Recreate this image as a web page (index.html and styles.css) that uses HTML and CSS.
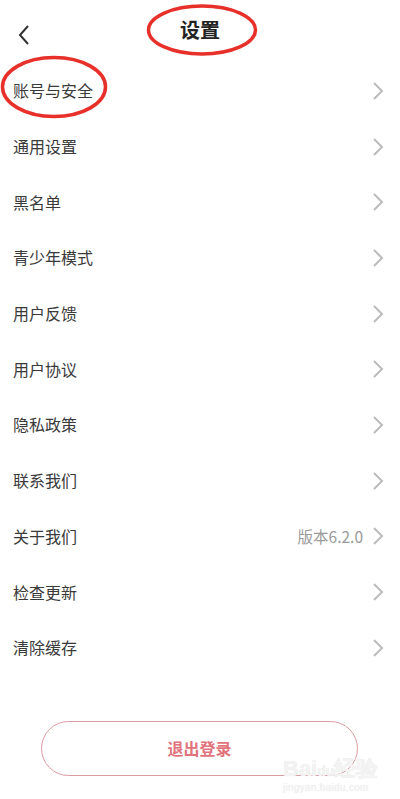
FILE: index.html
```html
<!DOCTYPE html>
<html lang="zh">
<head>
<meta charset="utf-8">
<link rel="stylesheet" href="styles.css">
</head>
<body>
<div class="page">
  <header class="header">
    <svg class="back" width="14" height="22" viewBox="0 0 14 22"><path d="M11 2 L3 11 L11 20" fill="none" stroke="#333" stroke-width="2"/></svg>
    <h1 class="title">设置</h1>
  </header>
  <ul class="list">
    <li class="row"><span class="label">账号与安全</span><span class="right"><svg class="chev" width="12" height="20" viewBox="0 0 12 20"><path d="M2 2 L10 10 L2 18" fill="none" stroke="#bbb" stroke-width="2"/></svg></span></li>
    <li class="row"><span class="label">通用设置</span><span class="right"><svg class="chev" width="12" height="20" viewBox="0 0 12 20"><path d="M2 2 L10 10 L2 18" fill="none" stroke="#bbb" stroke-width="2"/></svg></span></li>
    <li class="row"><span class="label">黑名单</span><span class="right"><svg class="chev" width="12" height="20" viewBox="0 0 12 20"><path d="M2 2 L10 10 L2 18" fill="none" stroke="#bbb" stroke-width="2"/></svg></span></li>
    <li class="row"><span class="label">青少年模式</span><span class="right"><svg class="chev" width="12" height="20" viewBox="0 0 12 20"><path d="M2 2 L10 10 L2 18" fill="none" stroke="#bbb" stroke-width="2"/></svg></span></li>
    <li class="row"><span class="label">用户反馈</span><span class="right"><svg class="chev" width="12" height="20" viewBox="0 0 12 20"><path d="M2 2 L10 10 L2 18" fill="none" stroke="#bbb" stroke-width="2"/></svg></span></li>
    <li class="row"><span class="label">用户协议</span><span class="right"><svg class="chev" width="12" height="20" viewBox="0 0 12 20"><path d="M2 2 L10 10 L2 18" fill="none" stroke="#bbb" stroke-width="2"/></svg></span></li>
    <li class="row"><span class="label">隐私政策</span><span class="right"><svg class="chev" width="12" height="20" viewBox="0 0 12 20"><path d="M2 2 L10 10 L2 18" fill="none" stroke="#bbb" stroke-width="2"/></svg></span></li>
    <li class="row"><span class="label">联系我们</span><span class="right"><svg class="chev" width="12" height="20" viewBox="0 0 12 20"><path d="M2 2 L10 10 L2 18" fill="none" stroke="#bbb" stroke-width="2"/></svg></span></li>
    <li class="row"><span class="label">关于我们</span><span class="right"><span class="version">版本6.2.0</span><svg class="chev" width="12" height="20" viewBox="0 0 12 20"><path d="M2 2 L10 10 L2 18" fill="none" stroke="#bbb" stroke-width="2"/></svg></span></li>
    <li class="row"><span class="label">检查更新</span><span class="right"><svg class="chev" width="12" height="20" viewBox="0 0 12 20"><path d="M2 2 L10 10 L2 18" fill="none" stroke="#bbb" stroke-width="2"/></svg></span></li>
    <li class="row"><span class="label">清除缓存</span><span class="right"><svg class="chev" width="12" height="20" viewBox="0 0 12 20"><path d="M2 2 L10 10 L2 18" fill="none" stroke="#bbb" stroke-width="2"/></svg></span></li>
  </ul>
  <div class="footer">
    <button class="logout">退出登录</button>
  </div>

  <svg class="marks" width="400" height="130" viewBox="0 0 400 130">
    <ellipse cx="202" cy="30" rx="53.5" ry="24" fill="none" stroke="#e8302a" stroke-width="3.5"/>
    <ellipse cx="54" cy="87" rx="51.5" ry="29.5" fill="none" stroke="#e8302a" stroke-width="3.5"/>
  </svg>
  <div class="watermark">
    <div class="wm-main">Bai<span class="wm-du">du</span>经验</div>
    <div class="wm-sub">jingyan.baidu.com</div>
  </div>
</div>
</body>
</html>
```
FILE: styles.css
```css
* { box-sizing: border-box; }
html, body { margin: 0; padding: 0; background: #fff; }
body {
  font-family: "Noto Sans CJK SC", "Noto Sans", sans-serif;
  color: #333;
}
.page {
  position: relative;
  width: 400px;
  height: 799px;
  overflow: hidden;
}
.header {
  height: 63px;
  display: flex;
  align-items: center;
  justify-content: center;
  position: relative;
  padding-bottom: 4px;
}
.back {
  position: absolute;
  left: 17px;
  top: 24px;
}
.title {
  margin: 0;
  font-size: 20px;
  font-weight: 700;
  color: #222;
  line-height: 1;
}
.list {
  list-style: none;
  margin: 0;
  padding: 0;
}
.row {
  height: 55.7px;
  display: flex;
  align-items: center;
  justify-content: space-between;
  padding: 0 16px 0 13px;
}
.label {
  font-size: 16px;
  color: #3a3a3a;
  line-height: 1;
  margin-top: -1px;
}
.right {
  display: flex;
  align-items: center;
  gap: 9px;
}
.version {
  font-size: 15.5px;
  color: #9a9a9a;
  line-height: 1;
}
.chev { display: block; }
.footer {
  padding-top: 45px;
  display: flex;
  justify-content: center;
}
.logout {
  width: 317px;
  height: 55px;
  margin-left: -1px;
  border: 1.5px solid #dc9ba1;
  border-radius: 28px;
  background: #fff;
  color: #e0737b;
  font-family: "Noto Sans CJK SC", sans-serif;
  font-size: 16px;
  font-weight: 700;
}
.marks {
  position: absolute;
  left: 0;
  top: 0;
  pointer-events: none;
}
.watermark {
  position: absolute;
  left: 283px;
  top: 758px;
  color: #f3f3f3;
  font-family: "Liberation Sans", sans-serif;
  text-shadow: 0 0 1px #e2e2e2;
}
.wm-main {
  font-size: 22px;
  font-weight: 700;
  line-height: 1;
}
.wm-du { font-size: 14px; }
.wm-sub {
  font-size: 10px;
  margin-top: 2px;
  letter-spacing: 0.3px;
}
```
